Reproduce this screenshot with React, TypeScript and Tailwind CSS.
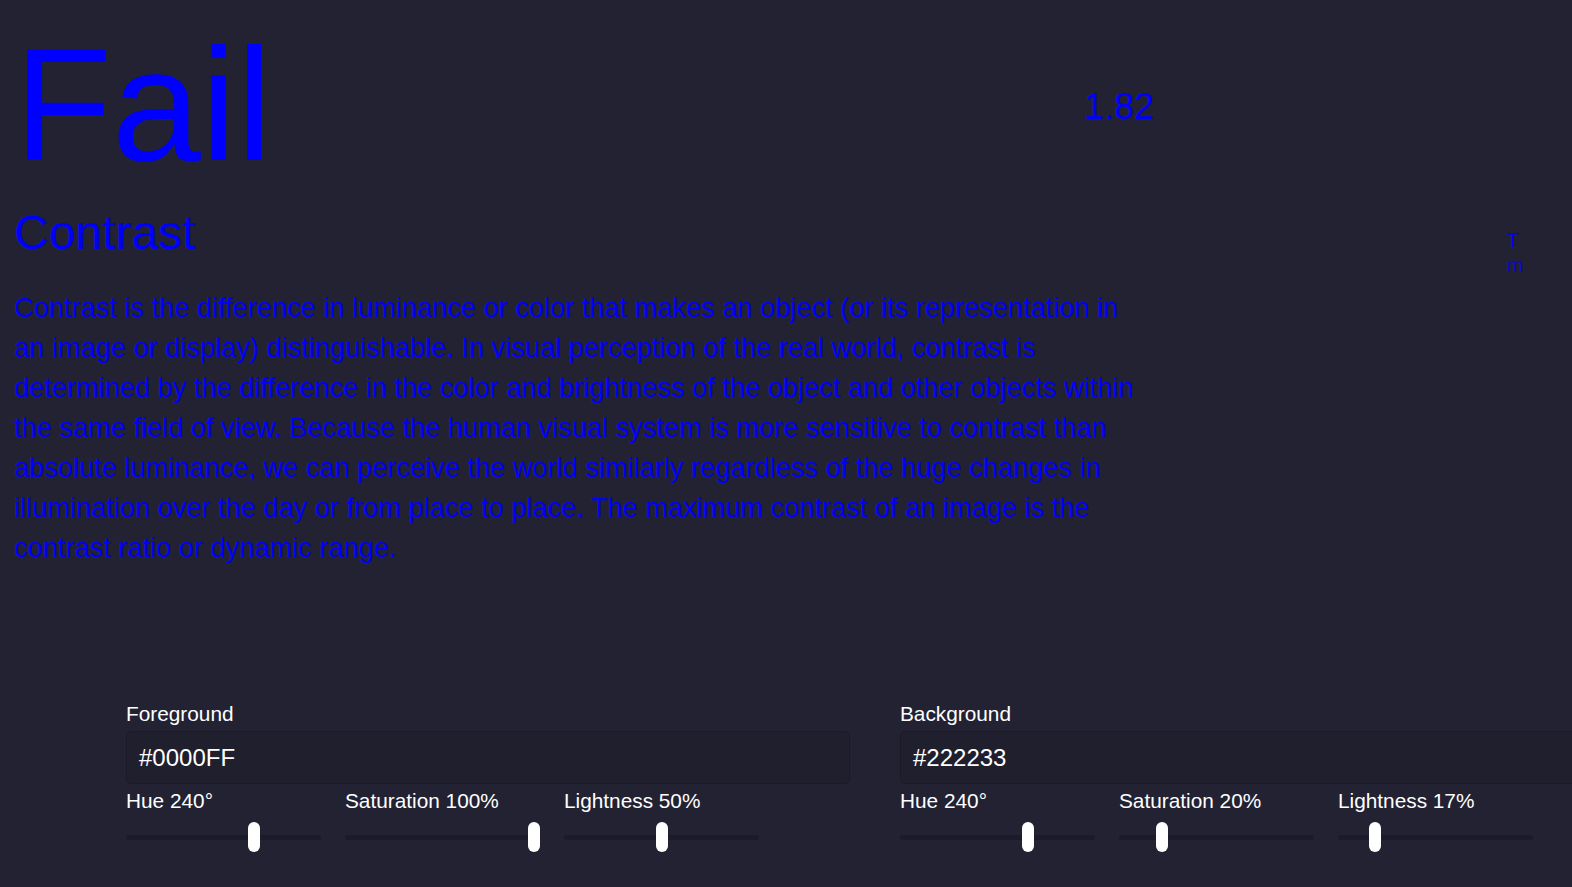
import React from 'react';

const FG = '#0000FF';

interface SliderProps {
  label: string;
  value: number;
  max: number;
}

function Slider({ label, value, max }: SliderProps) {
  const frac = value / max;
  return (
    <div className="w-[195px] shrink-0">
      <div className="text-[20.8px] leading-[28px] text-white whitespace-nowrap">{label}</div>
      <div className="h-[44px] flex items-center">
        <div className="relative w-full h-[5px] rounded-full bg-[#1b1b29]">
          <div
            className="absolute top-1/2 -translate-y-1/2 w-[12px] h-[30px] rounded-[6px] bg-white"
            style={{ left: `${frac * (195 - 12)}px` }}
          />
        </div>
      </div>
    </div>
  );
}

interface ColorBlockProps {
  title: string;
  hex: string;
  hue: number;
  sat: number;
  light: number;
}

function ColorBlock({ title, hex, hue, sat, light }: ColorBlockProps) {
  return (
    <div className="w-[724px] shrink-0">
      <div className="text-[20.8px] leading-[28px] text-white">{title}</div>
      <div className="mt-[3px] h-[53px] flex items-center px-[12px] rounded-[5px] border border-[#1b1b28] bg-[#1f1f2e] text-white text-[24px]">
        {hex}
      </div>
      <div className="mt-[3px] flex gap-[24px]">
        <Slider label={`Hue ${hue}°`} value={hue} max={360} />
        <Slider label={`Saturation ${sat}%`} value={sat} max={100} />
        <Slider label={`Lightness ${light}%`} value={light} max={100} />
      </div>
    </div>
  );
}

export default function App() {
  return (
    <div className="h-[887px] w-full overflow-hidden bg-[#222233] font-['Liberation_Sans',Arial,sans-serif]">
      <div className="flex">
        <div className="w-[1154px] shrink-0 pl-[14px] pt-[25px]">
          <div className="flex items-center justify-between">
            <h1 className="text-[160px] leading-none" style={{ color: FG }}>Fail</h1>
            <div className="mt-[3px] text-[36px] leading-none" style={{ color: FG }}>1.82</div>
          </div>
          <h2 className="mt-[24px] text-[48px] leading-none" style={{ color: FG }}>Contrast</h2>
          <p className="mt-[31px] max-w-[1132px] text-[27.2px] leading-[40px]" style={{ color: FG }}>
            Contrast is the difference in luminance or color that makes an object (or its representation in
            an image or display) distinguishable. In visual perception of the real world, contrast is
            determined by the difference in the color and brightness of the object and other objects within
            the same field of view. Because the human visual system is more sensitive to contrast than
            absolute luminance, we can perceive the world similarly regardless of the huge changes in
            illumination over the day or from place to place. The maximum contrast of an image is the
            contrast ratio or dynamic range.
          </p>
        </div>
        <div className="flex-1 pl-[352px] pt-[227px] text-[21px] leading-[25px] text-[#0000ff]">
          <div>T</div>
          <div className="opacity-70">m</div>
        </div>
      </div>

      <div className="mt-[132px] pl-[126px] flex gap-[50px]">
        <ColorBlock title="Foreground" hex="#0000FF" hue={240} sat={100} light={50} />
        <ColorBlock title="Background" hex="#222233" hue={240} sat={20} light={17} />
      </div>
    </div>
  );
}
